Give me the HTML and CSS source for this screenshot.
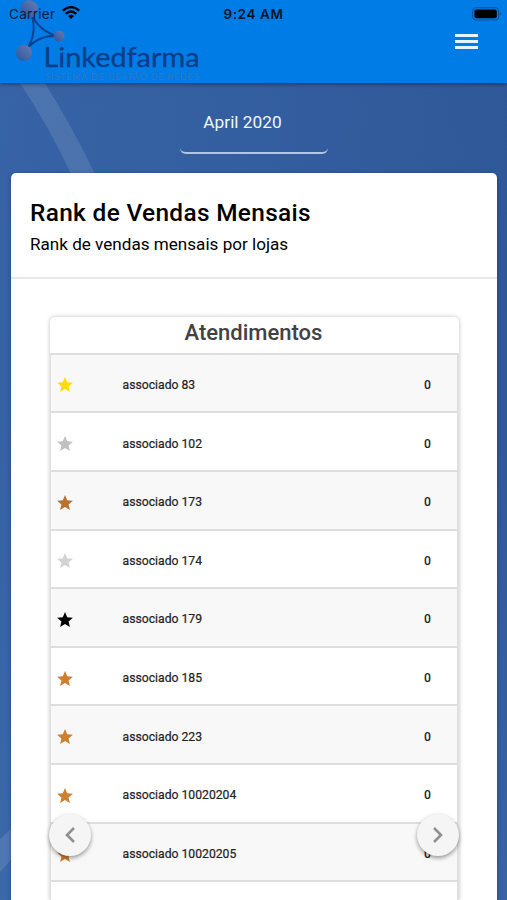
FILE: index.html
```html
<!DOCTYPE html>
<html lang="pt-BR">
<head>
    <meta charset="UTF-8">
    <meta name="viewport" content="width=device-width, initial-scale=1">
    <title>Linkedfarma</title>
    <link rel="stylesheet" href="styles.css">
</head>
<body>
    <svg class="backdrop" viewBox="0 0 507 900" aria-hidden="true">
        <path d="M18 80Q49 126 72 176H96Q72 126 43 80Z"/>
        <path d="M0 839L11 829V860L0 872Z"/>
    </svg>

    <header class="topbar">
        <svg class="logo" width="200" height="83" viewBox="0 0 200 83">
            <defs>
                <linearGradient id="ball" x1="0" y1="1" x2="1" y2="0">
                    <stop offset="0" stop-color="#26569f"/>
                    <stop offset="1" stop-color="#6b7bb2"/>
                </linearGradient>
            </defs>
            <path d="M32 16Q37 34 27 49Q38 35 57 36Q41 32 32 16Z" fill="none" stroke="#0b4190" stroke-width="2"/>
            <circle cx="29" cy="9" r="9" fill="url(#ball)"/>
            <circle cx="59" cy="36" r="5.5" fill="url(#ball)"/>
            <circle cx="24" cy="53" r="8" fill="url(#ball)"/>
            <text class="logo-name" x="43.5" y="66.5" textLength="156" lengthAdjust="spacingAndGlyphs">Linkedfarma</text>
            <text class="logo-tag" x="45" y="80" textLength="153">SISTEMA DE GESTÃO DE REDES</text>
        </svg>
        <button class="menu-button" aria-label="Menu">
            <span></span>
            <span></span>
            <span></span>
        </button>

        <div class="status-bar">
            <div class="carrier">
                Carrier
                <svg width="18" height="13" viewBox="0 0 18 13">
                    <g fill="none" stroke="#000" stroke-width="2.3">
                        <path d="M.8 4.7Q9-2.5 17.2 4.7"/>
                        <path d="M3.7 7.9Q9 3.2 14.3 7.9"/>
                    </g>
                    <path d="M6 10Q9 7.6 12 10L9 13Z"/>
                </svg>
            </div>
            <div class="clock">9:24 AM</div>
            <svg class="battery" width="30" height="14" viewBox="0 0 30 14">
                <rect x=".6" y=".6" width="26" height="12.4" rx="3.6" fill="none" stroke="#07549f" stroke-width="1.1"/>
                <rect x="2.4" y="2.4" width="22.4" height="8.8" rx="2"/>
                <path d="M28 4.7Q30 6.8 28 8.9Z" fill="#07549f"/>
            </svg>
        </div>
    </header>

    <main class="content">
        <div class="month-picker">April 2020</div>

        <section class="card">
            <div class="card-header">
                <h1>Rank de Vendas Mensais</h1>
                <p>Rank de vendas mensais por lojas</p>
            </div>

            <div class="slide">
                <h2>Atendimentos</h2>
                <ul class="rank">
                    <li><svg class="star gold" viewBox="2 2 20 19"><use href="#star"/></svg><span>associado 83</span><b>0</b></li>
                    <li><svg class="star silver" viewBox="2 2 20 19"><use href="#star"/></svg><span>associado 102</span><b>0</b></li>
                    <li><svg class="star bronze-dark" viewBox="2 2 20 19"><use href="#star"/></svg><span>associado 173</span><b>0</b></li>
                    <li><svg class="star light" viewBox="2 2 20 19"><use href="#star"/></svg><span>associado 174</span><b>0</b></li>
                    <li><svg class="star black" viewBox="2 2 20 19"><use href="#star"/></svg><span>associado 179</span><b>0</b></li>
                    <li><svg class="star bronze" viewBox="2 2 20 19"><use href="#star"/></svg><span>associado 185</span><b>0</b></li>
                    <li><svg class="star bronze" viewBox="2 2 20 19"><use href="#star"/></svg><span>associado 223</span><b>0</b></li>
                    <li><svg class="star bronze" viewBox="2 2 20 19"><use href="#star"/></svg><span>associado 10020204</span><b>0</b></li>
                    <li><svg class="star bronze" viewBox="2 2 20 19"><use href="#star"/></svg><span>associado 10020205</span><b>0</b></li>
                    <li class="cut"></li>
                </ul>
                <button class="arrow prev" aria-label="Anterior">
                    <svg width="12" height="18" viewBox="0 0 12 18"><path d="M10 2L3 9L10 16"/></svg>
                </button>
                <button class="arrow next" aria-label="Próximo">
                    <svg width="12" height="18" viewBox="0 0 12 18"><path d="M2 2L9 9L2 16"/></svg>
                </button>
            </div>
        </section>
    </main>

    <svg class="sprite" aria-hidden="true">
        <defs>
            <path id="star" d="M12 17.27L18.18 21l-1.64-7.03L22 9.24l-7.19-.61L12 2 9.19 8.63 2 9.24l5.46 4.73L5.82 21z"/>
        </defs>
    </svg>
</body>
</html>
```

FILE: styles.css
```css
* {
    margin: 0;
    padding: 0;
    box-sizing: border-box;
}

body {
    height: 900px;
    overflow: hidden;
    position: relative;
    font-family: Roboto, sans-serif;
    color: #000;
    background: linear-gradient(100deg, rgba(62, 112, 180, 0.5), rgba(40, 80, 145, 0) 85%),
        linear-gradient(180deg, #2f5797 0%, #30599a 50%, #3864a3 100%);
}

button {
    border: none;
    background: none;
}

.backdrop {
    position: absolute;
    top: 0;
    left: 0;
    width: 507px;
    height: 900px;
    fill: rgba(255, 255, 255, 0.11);
}

.sprite {
    position: absolute;
    top: 0;
    width: 0;
    height: 0;
}

/* Top bar */
.topbar {
    position: relative;
    display: flex;
    justify-content: space-between;
    height: 83px;
    padding-right: 29px;
    background: #007ce6;
    box-shadow: 0 1px 4px rgba(0, 0, 0, 0.45);
}

.logo-name {
    font-family: Lato, sans-serif;
    font-size: 26px;
    fill: #0b3d88;
    stroke: #0b3d88;
    stroke-width: 0.3px;
}

.logo-tag {
    font-family: Lato, sans-serif;
    font-size: 8.5px;
    fill: #3674bf;
}

.menu-button {
    display: flex;
    flex-direction: column;
    gap: 3.4px;
    width: 23px;
    padding-top: 34px;
}

.menu-button span {
    width: 23px;
    height: 2.8px;
    background: #e4f5ff;
}

.status-bar {
    position: absolute;
    top: 0;
    left: 0;
    width: 100%;
    height: 28px;
    padding: 0 5px 0 9px;
    display: grid;
    grid-template-columns: 1fr auto 1fr;
    align-items: center;
    font-family: Inter, sans-serif;
    font-size: 13.5px;
}

.carrier {
    display: flex;
    align-items: center;
    gap: 7px;
    color: #08203d;
    letter-spacing: 0.3px;
}

.carrier svg {
    margin-top: -3px;
}

.clock {
    margin-right: 4px;
    font-weight: 600;
    color: #03152b;
    letter-spacing: 0.6px;
}

.battery {
    justify-self: end;
    margin-top: -1px;
}

/* Content */
.content {
    position: relative;
    padding: 10px 10px 0 11px;
}

.month-picker {
    width: 148px;
    height: 61px;
    margin: 0 auto 19px;
    padding-right: 23px;
    border-bottom: 2px solid #b3c6e6;
    border-radius: 6px;
    color: #f0f5ff;
    font-size: 17.3px;
    line-height: 59px;
    text-align: center;
}

.card {
    height: 727px;
    background: #fff;
    border-radius: 5px 5px 0 0;
    box-shadow: 0 1px 4px rgba(0, 0, 0, 0.3);
}

.card-header {
    height: 106px;
    padding: 24px 19px 0;
    border-bottom: 2px solid #e8e8e8;
}

.card-header h1 {
    font-size: 24.4px;
    font-weight: 500;
    line-height: 32px;
    letter-spacing: 0.34px;
}

.card-header p {
    font-size: 17.1px;
    line-height: 31px;
}

/* Ranking slide */
.slide {
    position: relative;
    margin: 38px 38px 0 39px;
    border-radius: 5px 5px 0 0;
    box-shadow: 0 0 4px rgba(0, 0, 0, 0.25);
}

.slide h2 {
    height: 35.6px;
    padding-right: 2px;
    color: #424242;
    font-size: 22px;
    font-weight: 500;
    line-height: 31px;
    text-align: center;
}

.rank {
    list-style: none;
    border: solid #e0e0e0;
    border-width: 0 2px 0 1px;
}

.rank li {
    display: flex;
    align-items: center;
    height: 58.65px;
    padding: 4px 26px 0 5.5px;
    border-top: 2.4px solid #dedede;
    color: #222;
    font-size: 12.2px;
}

.rank li:nth-child(odd) {
    background: #f8f8f8;
}

/* last row is cut by the bottom of the screen */
.rank .cut {
    height: 19.5px;
}

.rank span {
    flex: 1;
    margin-left: 50px;
    -webkit-text-stroke: 0.2px;
}

.rank b {
    font-weight: 500;
}

.star {
    width: 16px;
    height: 15px;
}

.gold { fill: #ffdc05; }
.silver { fill: #c0c0c0; }
.light { fill: #d3d3d3; }
.bronze { fill: #cd7f32; }
.bronze-dark { fill: #b87333; }
.black { fill: #000; }

.arrow {
    position: absolute;
    top: 497px;
    display: flex;
    align-items: center;
    justify-content: center;
    width: 42px;
    height: 42px;
    border-radius: 50%;
    background: #f5f5f5;
    box-shadow: 0 2px 4px rgba(0, 0, 0, 0.4);
}

.prev { left: -1px; }
.next { right: 0; }

.arrow path {
    fill: none;
    stroke: #909090;
    stroke-width: 2.6;
}
```
